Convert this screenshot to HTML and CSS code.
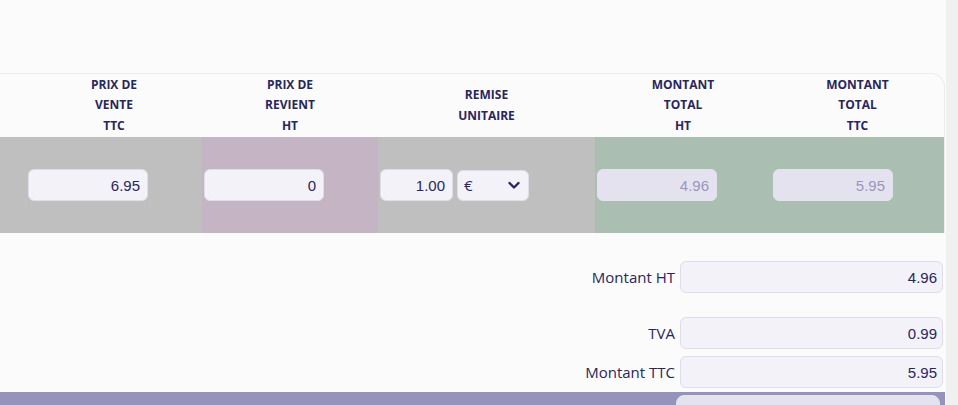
FILE: index.html
```html
<!DOCTYPE html>
<html>
<head>
	<meta charset="utf-8">
	<title>Lignes</title>
	<link rel="stylesheet" href="styles.css">
</head>
<body>
	<div class="page">
		<div class="main">
			<div class="card">
				<div class="row head">
					<div class="cell"></div>
					<div class="cell">PRIX DE<br>VENTE<br>TTC</div>
					<div class="cell">PRIX DE<br>REVIENT<br>HT</div>
					<div class="cell">REMISE<br>UNITAIRE</div>
					<div class="cell">MONTANT<br>TOTAL<br>HT</div>
					<div class="cell">MONTANT<br>TOTAL<br>TTC</div>
				</div>
				<div class="row body">
					<div class="cell gray"></div>
					<div class="cell gray"><input class="field" type="text" value="6.95"></div>
					<div class="cell pink"><input class="field" type="text" value="0"></div>
					<div class="cell gray">
						<input class="field short" type="text" value="1.00">
						<div class="select">
							<span>€</span>
							<svg width="14" height="14" viewBox="0 0 14 14"><path d="M2.5 5l4.5 4.5 4.5-4.5" fill="none" stroke="#28265e" stroke-width="2.4" stroke-linecap="round" stroke-linejoin="round"/></svg>
						</div>
					</div>
					<div class="cell green"><input class="field off" type="text" value="4.96" disabled></div>
					<div class="cell green"><input class="field off" type="text" value="5.95" disabled></div>
				</div>
			</div>
			<div class="totals">
				<div class="line"><label>Montant HT</label><input class="field wide" type="text" value="4.96"></div>
				<div class="line tva"><label>TVA</label><input class="field wide" type="text" value="0.99"></div>
				<div class="line ttc"><label>Montant TTC</label><input class="field wide" type="text" value="5.95"></div>
			</div>
			<div class="due">
				<div class="line"><label></label><input class="field wide off" type="text" value="5.95" disabled></div>
			</div>
		</div>
		<div class="track"></div>
	</div>
</body>
</html>
```

FILE: styles.css
```css
*{margin: 0; padding: 0; box-sizing: border-box;}
body{
	font-family: "Open Sans", "Noto Sans", sans-serif;
	color: #28265e;
	background: #fbfbfb;
	overflow: hidden;
}
.page{
	display: flex;
	height: 405px;
	overflow: hidden;
}
.main{
	width: 946px;
	height: 405px;
	padding-top: 73px;
	overflow: hidden;
}
.track{
	flex: 1;
	background: #f0f0f0;
}
.card{
	width: 945px;
	border-top: 1px solid #ececec;
	border-right: 1px solid #ececec;
	border-top-right-radius: 14px;
}
.row{
	display: grid;
	grid-template-columns: 26px 176px 176px 217px 176px 1fr;
}
.head{
	height: 63px;
	font-size: 12px;
	font-weight: 700;
	line-height: 20.5px;
	text-align: center;
}
.head .cell{
	display: flex;
	align-items: center;
	justify-content: center;
}
.body{
	height: 96px;
}
.body .cell{
	display: flex;
	align-items: center;
	padding-left: 2px;
}
.gray{ background: #bfbfbf; }
.pink{ background: #c5b4c4; }
.green{ background: #aabfb2; }
.field{
	width: 120px;
	height: 32px;
	border: 1px solid #dedde8;
	border-radius: 6px;
	background: #f3f2f8;
	color: #28265e;
	font-family: "Liberation Sans", Arial, sans-serif;
	font-size: 15px;
	text-align: right;
	padding: 0 7px;
}
.field.short{
	width: 73px;
}
.field.off{
	background: #e4e2ee;
	border-color: #e4e2ee;
	color: #9896bf;
}
.select{
	width: 72px;
	height: 31px;
	margin-left: 4px;
	border: 1px solid #dedde8;
	border-radius: 6px;
	background: #f3f2f8;
	display: flex;
	align-items: center;
	justify-content: space-between;
	padding: 0 7px 0 6px;
	font-size: 15px;
}
.totals{
	padding-top: 28px;
	width: 945px;
}
.line{
	display: flex;
	justify-content: flex-end;
	align-items: center;
	gap: 5px;
	padding-right: 2px;
	font-size: 15px;
}
.line.tva{
	margin-top: 24px;
}
.line.ttc{
	margin-top: 7px;
}
.field.wide{
	width: 263px;
	padding: 0 5px;
}
.due{
	width: 945px;
	background: #9592bb;
	margin-top: 4px;
	padding-top: 3px;
	height: 40px;
}
.due .line{
	padding-right: 5px;
}
.due .field{
	width: 264px;
	border-radius: 8px;
}
```
